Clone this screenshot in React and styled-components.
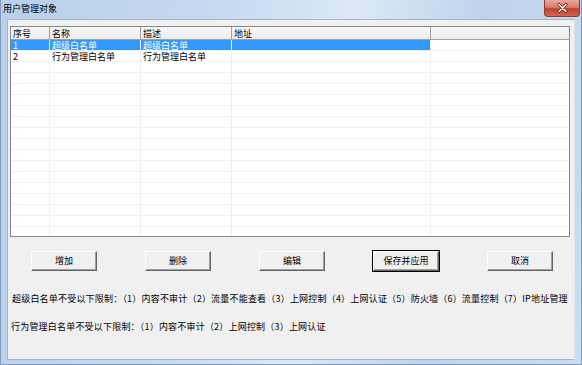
import React from 'react';
import styled, { createGlobalStyle } from 'styled-components';

const GlobalStyle = createGlobalStyle`
  html, body {
    margin: 0;
    padding: 0;
    background: #fff;
  }
  body {
    font-family: "Noto Sans CJK SC", "Liberation Sans", sans-serif;
    font-size: 9px;
    color: #000;
  }
`;

const columns = [
  { key: 'no', title: '序号', width: 39 },
  { key: 'name', title: '名称', width: 91 },
  { key: 'desc', title: '描述', width: 91 },
  { key: 'addr', title: '地址', width: 199 },
];

const rows = [
  { no: '1', name: '超级白名单', desc: '超级白名单', addr: '' },
  { no: '2', name: '行为管理白名单', desc: '行为管理白名单', addr: '' },
];

const EMPTY_ROWS = 16;

const buttons = [
  { label: '增加' },
  { label: '删除' },
  { label: '编辑' },
  { label: '保存并应用', primary: true },
  { label: '取消' },
];

const Window = styled.div`
  width: 582px;
  height: 365px;
  display: flex;
  flex-direction: column;
  box-sizing: border-box;
  border: 1px solid #7d9bbf;
  border-top: none;
  background: linear-gradient(100deg, #b9d0ea 0%, #c6daf0 35%, #dce8f5 55%, #bfd4ec 75%, #c9dcf0 100%);
  overflow: hidden;
`;

const TitleBar = styled.div`
  height: 19px;
  display: flex;
  align-items: flex-start;
  flex-shrink: 0;
`;

const Title = styled.div`
  padding: 3px 0 0 2px;
  font-size: 9px;
  line-height: 12px;
  color: #000;
`;

const CloseButton = styled.div`
  margin-left: auto;
  margin-right: 1px;
  width: 36px;
  height: 17px;
  box-sizing: border-box;
  border: 1px solid #8a3b32;
  border-top: none;
  border-radius: 0 0 4px 4px;
  background: linear-gradient(#e9a99c 0%, #d9806f 45%, #c2412f 55%, #d0664f 100%);
  display: flex;
  align-items: center;
  justify-content: center;
`;

const Frame = styled.div`
  flex: 1;
  display: flex;
  padding: 0 6px 4px 6px;
`;

const Client = styled.div`
  flex: 1;
  background: #f0f0f0;
  border-top: 1px solid #a5b3c4;
  border-left: 1px solid #a5b3c4;
  border-right: 1px solid #dfe6ee;
  border-bottom: 1px solid #a5b3c4;
  padding: 6px 3px 0 2px;
  display: flex;
  flex-direction: column;
`;

const ListView = styled.div`
  width: 560px;
  height: 211px;
  box-sizing: border-box;
  border: 1px solid #828790;
  background: #fff;
  overflow: hidden;
`;

const HeaderRow = styled.div`
  display: flex;
  height: 12px;
  background: linear-gradient(#f7f7f7, #ececec);
  border-bottom: 1px solid #a0a0a0;
`;

const HeaderCell = styled.div`
  width: ${(p) => (p.$w ? `${p.$w}px` : 'auto')};
  flex: ${(p) => (p.$w ? '0 0 auto' : '1')};
  box-sizing: border-box;
  border-right: ${(p) => (p.$w ? '1px solid #a0a0a0' : 'none')};
  padding-left: 2px;
  font-size: 9px;
  line-height: 13px;
  white-space: nowrap;
`;

const Row = styled.div`
  display: flex;
  height: 11px;
`;

const Cell = styled.div`
  width: ${(p) => (p.$w ? `${p.$w}px` : 'auto')};
  flex: ${(p) => (p.$w ? '0 0 auto' : '1')};
  box-sizing: border-box;
  border-right: ${(p) => (p.$w ? '1px solid #f0f0f0' : 'none')};
  box-shadow: inset 0 -1px 0 #f0f0f0;
  background: ${(p) => (p.$selected ? '#3399ff' : 'transparent')};
  color: ${(p) => (p.$selected ? '#fff' : '#000')};
  padding-left: 2px;
  font-size: 9px;
  line-height: 11px;
  white-space: nowrap;
`;

const ButtonRow = styled.div`
  display: flex;
  gap: 48px;
  padding: 14px 0 0 21px;
`;

const Button = styled.div`
  width: 66px;
  height: 20px;
  box-sizing: border-box;
  background: #f0f0f0;
  border: 1px solid;
  border-color: #ffffff #646464 #646464 #ffffff;
  box-shadow: inset -1px -1px 0 #a0a0a0${(p) => (p.$primary ? ', 0 0 0 1px #000' : '')};
  display: flex;
  align-items: center;
  justify-content: center;
  font-size: 9px;
  line-height: 12px;
`;

const Note = styled.div`
  padding-left: ${(p) => p.$indent}px;
  margin-top: ${(p) => p.$top}px;
  font-size: 9px;
  line-height: 12px;
  letter-spacing: 0.2px;
  white-space: nowrap;
`;

const CloseIcon = () => (
  <svg width="11" height="10" viewBox="0 0 11 10">
    <path d="M2 1.5 L9 8.5 M9 1.5 L2 8.5" stroke="#5a1a12" strokeWidth="3" strokeLinecap="round" />
    <path d="M2 1.5 L9 8.5 M9 1.5 L2 8.5" stroke="#ffffff" strokeWidth="1.6" strokeLinecap="round" />
  </svg>
);

const App = () => {
  return (
    <>
      <GlobalStyle />
      <Window>
        <TitleBar>
          <Title>用户管理对象</Title>
          <CloseButton>
            <CloseIcon />
          </CloseButton>
        </TitleBar>
        <Frame>
          <Client>
            <ListView>
              <HeaderRow>
                {columns.map((c) => (
                  <HeaderCell key={c.key} $w={c.width}>
                    {c.title}
                  </HeaderCell>
                ))}
                <HeaderCell />
              </HeaderRow>
              {rows.map((r, i) => (
                <Row key={r.no}>
                  {columns.map((c) => (
                    <Cell key={c.key} $w={c.width} $selected={i === 0}>
                      {r[c.key]}
                    </Cell>
                  ))}
                  <Cell />
                </Row>
              ))}
              {Array.from({ length: EMPTY_ROWS }).map((_, i) => (
                <Row key={`e${i}`}>
                  {columns.map((c) => (
                    <Cell key={c.key} $w={c.width} />
                  ))}
                  <Cell />
                </Row>
              ))}
            </ListView>
            <ButtonRow>
              {buttons.map((b) => (
                <Button key={b.label} $primary={b.primary}>
                  {b.label}
                </Button>
              ))}
            </ButtonRow>
            <Note $indent={2} $top={22}>
              超级白名单不受以下限制：（1）内容不审计（2）流量不能查看（3）上网控制（4）上网认证（5）防火墙（6）流量控制（7）IP地址管理
            </Note>
            <Note $indent={1} $top={16}>
              行为管理白名单不受以下限制：（1）内容不审计（2）上网控制（3）上网认证
            </Note>
          </Client>
        </Frame>
      </Window>
    </>
  );
};

export default App;
